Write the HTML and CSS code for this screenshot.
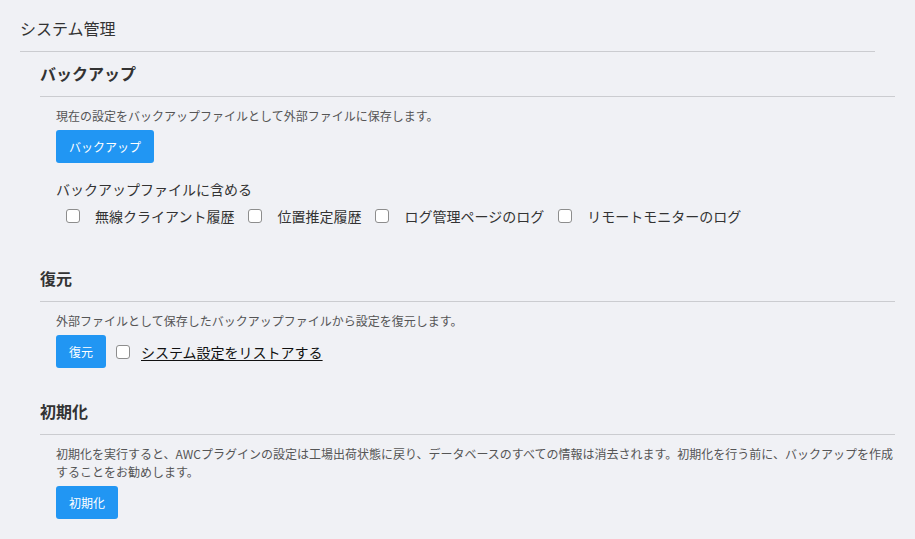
FILE: index.html
```html
<!DOCTYPE html>
<html lang="ja">
<head>
<meta charset="utf-8">
<title>システム管理</title>
<link rel="stylesheet" href="styles.css">
</head>
<body>
<div class="page">
  <h1 class="page-title">システム管理</h1>

  <section class="section section-backup">
    <h2 class="section-title">バックアップ</h2>
    <div class="section-body">
      <p class="desc">現在の設定をバックアップファイルとして外部ファイルに保存します。</p>
      <button class="btn">バックアップ</button>
      <div class="include-label">バックアップファイルに含める</div>
      <div class="check-row">
        <label class="check"><input type="checkbox" class="cb"><span>無線クライアント履歴</span></label>
        <label class="check"><input type="checkbox" class="cb"><span>位置推定履歴</span></label>
        <label class="check"><input type="checkbox" class="cb"><span>ログ管理ページのログ</span></label>
        <label class="check"><input type="checkbox" class="cb"><span>リモートモニターのログ</span></label>
      </div>
    </div>
  </section>

  <section class="section section-restore">
    <h2 class="section-title">復元</h2>
    <div class="section-body">
      <p class="desc">外部ファイルとして保存したバックアップファイルから設定を復元します。</p>
      <div class="restore-row">
        <button class="btn">復元</button>
        <label class="restore-check"><input type="checkbox" class="cb"><span class="link-label">システム設定をリストアする</span></label>
      </div>
    </div>
  </section>

  <section class="section section-init">
    <h2 class="section-title">初期化</h2>
    <div class="section-body">
      <p class="desc">初期化を実行すると、AWCプラグインの設定は工場出荷状態に戻り、データベースのすべての情報は消去されます。初期化を行う前に、バックアップを作成することをお勧めします。</p>
      <button class="btn">初期化</button>
    </div>
  </section>
</div>
</body>
</html>
```

FILE: styles.css
```css
* { box-sizing: border-box; }

html, body {
  margin: 0;
  padding: 0;
  background: #f0f1f5;
}

body {
  font-family: "Noto Sans CJK JP", "Noto Sans", sans-serif;
  color: #333;
  width: 915px;
  height: 539px;
  overflow: hidden;
}

.page {
  padding-left: 20px;
}

.page-title {
  margin: 0;
  width: 855px;
  padding: 16px 0 11px 0;
  font-size: 16px;
  line-height: 24px;
  font-weight: normal;
  color: #333;
  border-bottom: 1px solid #cbccd0;
}

.section {
  margin-left: 20px;
  width: 855px;
}

.section-backup { margin-top: 9px; }
.section-restore { margin-top: 40px; }
.section-init { margin-top: 31px; }

.section-title {
  margin: 0;
  padding-bottom: 11px;
  font-size: 16px;
  line-height: 24px;
  font-weight: bold;
  color: #333;
  border-bottom: 1px solid #cbccd0;
}

.section-body {
  padding-left: 16px;
}

.desc {
  margin: 10px 0 5px 0;
  font-size: 12px;
  line-height: 18px;
  color: #555;
}

.btn {
  display: inline-block;
  height: 33px;
  padding: 0 13px;
  border: none;
  border-radius: 3px;
  background: #2196f3;
  color: #fff;
  font-family: inherit;
  font-size: 12px;
  line-height: 33px;
  cursor: pointer;
  vertical-align: top;
}

.include-label {
  margin-top: 16px;
  font-size: 14px;
  line-height: 20px;
  color: #333;
}

.check-row {
  display: flex;
  margin-top: 7px;
  padding-left: 10px;
  font-size: 14px;
  line-height: 20px;
  color: #333;
}

.check {
  display: flex;
  align-items: center;
  margin-right: 14px;
}

.cb {
  appearance: none;
  -webkit-appearance: none;
  width: 14px;
  height: 14px;
  margin: 0;
  border: 1px solid #8d8d8d;
  border-radius: 3px;
  background: #fff;
  flex: none;
}

.check .cb { margin-right: 15px; }

.restore-row {
  display: flex;
  align-items: center;
}

.restore-check {
  display: flex;
  align-items: center;
  margin-left: 10px;
  font-size: 14px;
  line-height: 20px;
}

.restore-check .cb { margin-right: 11px; }

.link-label {
  color: #111;
  text-decoration: underline;
  text-underline-offset: 2px;
}
```
